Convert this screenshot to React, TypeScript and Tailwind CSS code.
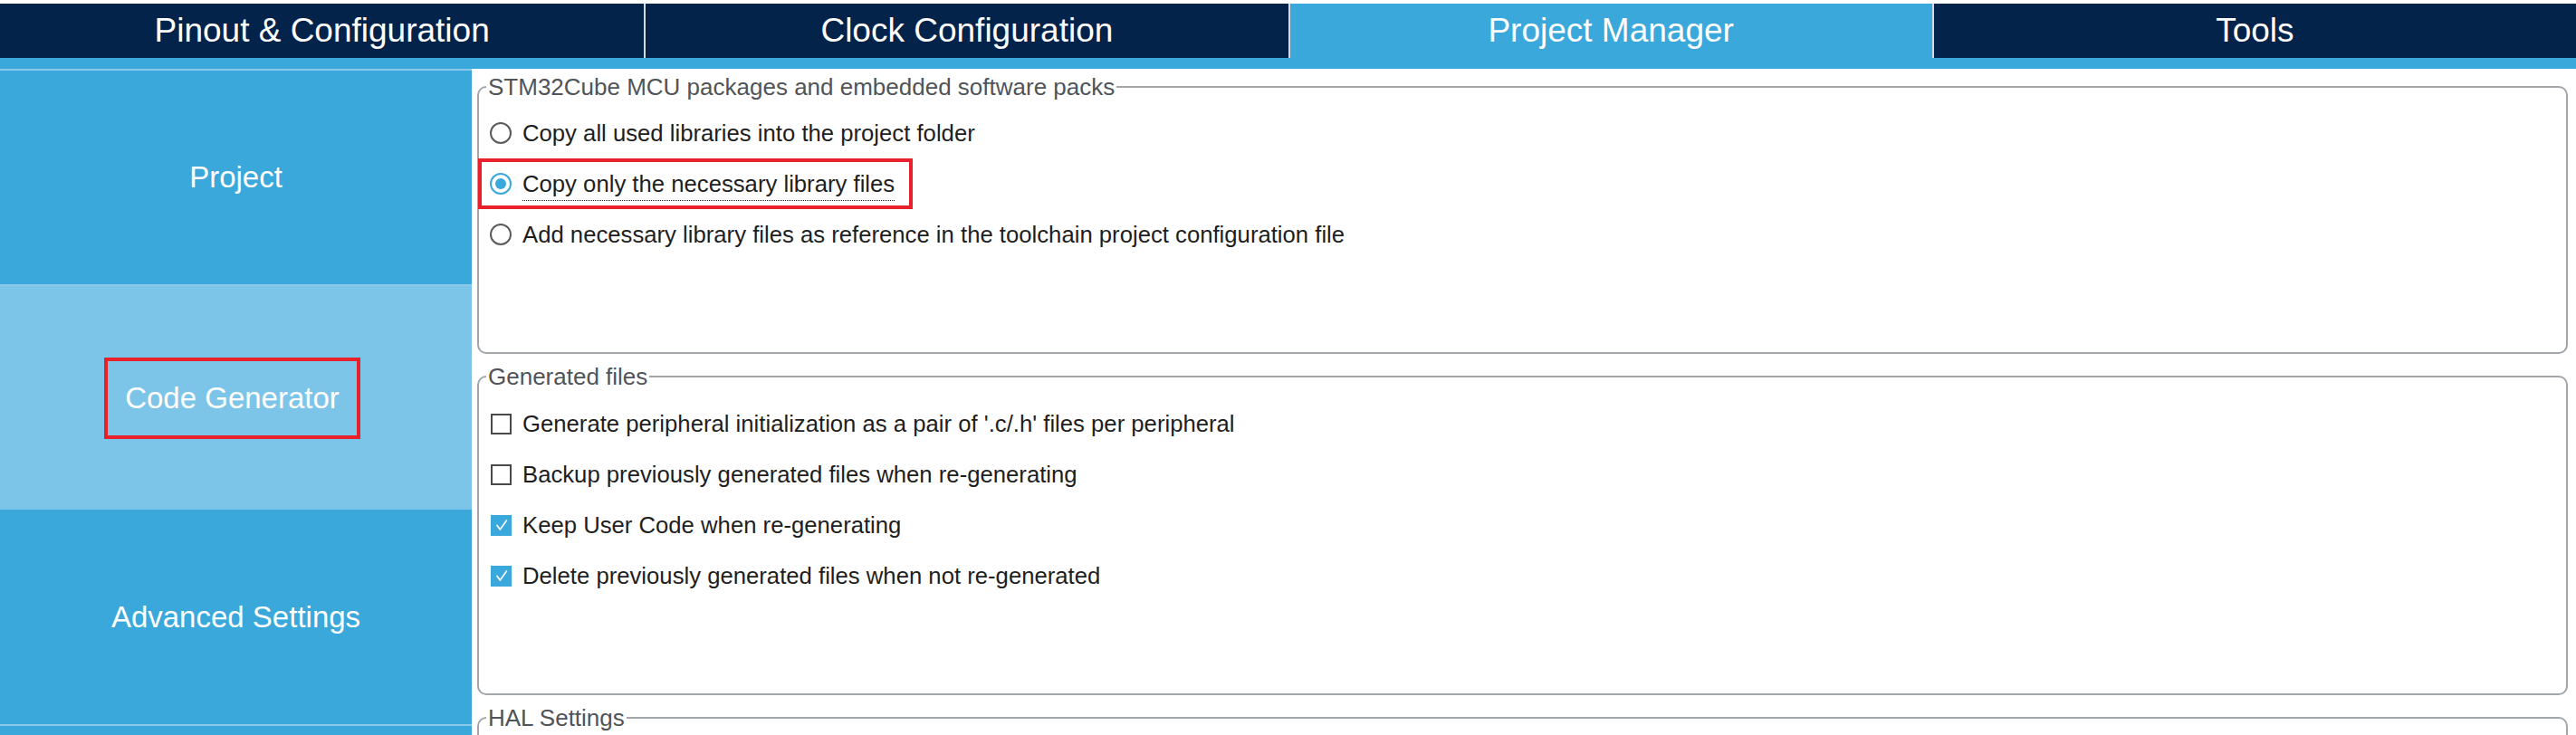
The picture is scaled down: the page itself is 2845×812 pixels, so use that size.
const tabs = [
  { name: 'Pinout & Configuration', active: false },
  { name: 'Clock Configuration', active: false },
  { name: 'Project Manager', active: true },
  { name: 'Tools', active: false },
];

const libraryOptions = [
  { label: 'Copy all used libraries into the project folder', checked: false },
  { label: 'Copy only the necessary library files', checked: true },
  { label: 'Add necessary library files as reference in the toolchain project configuration file', checked: false },
];

const generatedFiles = [
  { label: "Generate peripheral initialization as a pair of '.c/.h' files per peripheral", checked: false },
  { label: 'Backup previously generated files when re-generating', checked: false },
  { label: 'Keep User Code when re-generating', checked: true },
  { label: 'Delete previously generated files when not re-generated', checked: true },
];

function Radio({ checked }: { checked: boolean }) {
  if (checked) {
    return (
      <span className="w-[24px] h-[24px] rounded-full border-2 border-[#3aa8db] flex items-center justify-center shrink-0">
        <span className="w-[12px] h-[12px] rounded-full bg-[#3aa8db]" />
      </span>
    );
  }
  return <span className="w-[24px] h-[24px] rounded-full border-2 border-[#5a5a5a] shrink-0" />;
}

function Checkbox({ checked }: { checked: boolean }) {
  if (checked) {
    return (
      <span className="w-[23px] h-[23px] bg-[#3aa8db] flex items-center justify-center shrink-0">
        <svg viewBox="0 0 24 24" className="w-[20px] h-[20px]">
          <path d="M6 12.5l4 5.5L18.5 6" fill="none" stroke="white" strokeWidth="2" strokeLinecap="round" strokeLinejoin="round" />
        </svg>
      </span>
    );
  }
  return <span className="w-[23px] h-[23px] border-2 border-[#4a4a4a] shrink-0" />;
}

function Group({ title, className, children }: { title: string; className: string; children?: React.ReactNode }) {
  return (
    <fieldset className={`border-2 border-[#a2a6ab] rounded-[10px] shrink-0 ${className}`}>
      <legend className="ml-[8px] px-[2px] text-[26px] leading-[30px] text-[#505458]">{title}</legend>
      {children}
    </fieldset>
  );
}

export default function App() {
  return (
    <div className="w-[2845px] h-[812px] overflow-hidden bg-white font-['Liberation_Sans',Arial,sans-serif]">
      {/* Tabs */}
      <div className="pt-[4px]">
        <div className="grid grid-cols-4 h-[60px] bg-[#03234b]">
          {tabs.map((tab, i) => (
            <div
              key={tab.name}
              className={`flex items-center justify-center text-white text-[37px] ${i > 0 ? 'border-l-2 border-[#d5dbe1]' : ''} ${tab.active ? 'bg-[#3aa8db]' : ''}`}
            >
              {tab.name}
            </div>
          ))}
        </div>
      </div>
      <div className="h-[12px] bg-[#3aa8db]" />

      <div className="flex h-[736px]">
        {/* Sidebar */}
        <aside className="w-[521px] shrink-0 flex flex-col bg-[#3aa8db] text-white text-[33px]">
          <div className="h-[240px] border-t-2 border-b-2 border-[#88c9ea] flex items-center justify-center">
            Project
          </div>
          <div className="h-[247px] bg-[#7dc5e8] flex items-center justify-center">
            <span className="mr-[8px] w-[283px] h-[90px] border-4 border-[#e8202a] flex items-center justify-center">
              Code Generator
            </span>
          </div>
          <div className="h-[237px] flex items-center justify-center">Advanced Settings</div>
          <div className="flex-1 border-t-2 border-[#88c9ea]" />
        </aside>

        {/* Content */}
        <main className="flex-1 pl-[6px] pr-[9px] pt-[5px] flex flex-col gap-[10px] text-[25.7px] text-[#1e1e1e]">
          <Group title="STM32Cube MCU packages and embedded software packs" className="h-[310px]">
            <div className="pt-[8px]">
              {libraryOptions.map((opt) =>
                opt.checked ? (
                  <div key={opt.label} className="-ml-[1px] w-[480px] h-[56px] border-4 border-[#e8202a] pl-[9px] flex items-center gap-[12px]">
                    <Radio checked />
                    <span className="mt-[4px] leading-[30px] pb-[3px] border-b border-dotted border-[#222]">{opt.label}</span>
                  </div>
                ) : (
                  <div key={opt.label} className="h-[56px] pl-[12px] flex items-center gap-[12px]">
                    <Radio checked={false} />
                    <span className="leading-[30px]">{opt.label}</span>
                  </div>
                )
              )}
            </div>
          </Group>

          <Group title="Generated files" className="h-[367px]">
            <div className="pt-[9px]">
              {generatedFiles.map((opt) => (
                <div key={opt.label} className="h-[56px] pl-[13px] flex items-center gap-[12px]">
                  <Checkbox checked={opt.checked} />
                  <span className="leading-[30px]">{opt.label}</span>
                </div>
              ))}
            </div>
          </Group>

          <Group title="HAL Settings" className="h-[200px]" />
        </main>
      </div>
    </div>
  );
}
